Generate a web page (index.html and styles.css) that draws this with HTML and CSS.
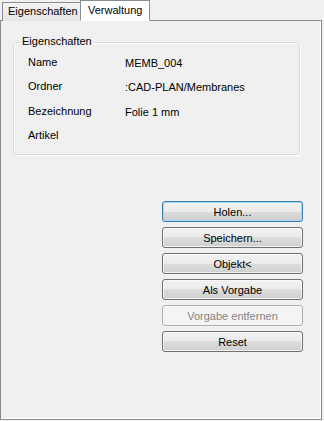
FILE: index.html
```html
<!DOCTYPE html>
<html lang="de">
<head>
    <meta charset="UTF-8">
    <title>Verwaltung</title>
    <link rel="stylesheet" href="styles.css">
</head>
<body>
    <div class="dialog">
        <div class="tabs">
            <div class="tab">Eigenschaften</div>
            <div class="tab active">Verwaltung</div>
        </div>

        <div class="panel">
            <div class="group">
                <span class="group-title">Eigenschaften</span>
                <div class="props">
                    <span class="prop-label">Name</span>
                    <span class="prop-value">MEMB_004</span>
                    <span class="prop-label">Ordner</span>
                    <span class="prop-value">:CAD-PLAN/Membranes</span>
                    <span class="prop-label">Bezeichnung</span>
                    <span class="prop-value">Folie 1 mm</span>
                    <span class="prop-label">Artikel</span>
                    <span class="prop-value"></span>
                </div>
            </div>

            <div class="actions">
                <button class="btn default">Holen...</button>
                <button class="btn">Speichern...</button>
                <button class="btn">Objekt&lt;</button>
                <button class="btn">Als Vorgabe</button>
                <button class="btn" disabled>Vorgabe entfernen</button>
                <button class="btn">Reset</button>
            </div>
        </div>
    </div>
</body>
</html>
```

FILE: styles.css
```css
body {
    margin: 0;
    padding: 0;
    background: #f0f0f0;
    font-family: Tahoma, "Liberation Sans", Arial, sans-serif;
    font-size: 11px;
    color: #000;
}

.dialog {
    width: 324px;
    height: 420px;
    display: flex;
    flex-direction: column;
}

.tabs {
    display: flex;
    align-items: flex-end;
    padding-left: 2px;
    height: 21px;
    position: relative;
    z-index: 1;
    margin-bottom: -1px;
}

.tab {
    box-sizing: border-box;
    width: 79px;
    height: 19px;
    padding-left: 5px;
    line-height: 17px;
    border: 1px solid #898c95;
    border-bottom: none;
    background: linear-gradient(#f3f3f3, #e5e5e5);
}

.tab.active {
    width: 70px;
    height: 21px;
    line-height: 18px;
    margin-left: -1px;
    padding-left: 7px;
    background: #fff;
    border-bottom: 1px solid #fff;
}

.panel {
    flex: 1;
    margin-right: 2px;
    border: 1px solid #898c95;
    box-shadow: inset -1px -1px 0 #fff;
    background: #f0f0f0;
    padding: 21px 18px 0 12px;
}

.group {
    position: relative;
    width: 271px;
    height: 111px;
    border: 1px solid #d5dfe5;
    border-radius: 3px;
    box-shadow: inset 1px 1px 0 #fff, 1px 1px 0 #fff;
    padding: 0 0 0 14px;
}

.group-title {
    position: absolute;
    top: -8px;
    left: 6px;
    padding: 0 2px;
    background: #f0f0f0;
    line-height: 13px;
}

.props {
    display: grid;
    grid-template-columns: 97px 1fr;
    grid-template-rows: 24px 25px 24px 24px;
    padding-top: 12px;
    line-height: 14px;
}

.prop-value {
    padding-top: 1px;
}

.actions {
    display: flex;
    flex-direction: column;
    align-items: flex-end;
    gap: 5px;
    margin-top: 46px;
}

.btn {
    width: 141px;
    height: 21px;
    font: inherit;
    color: #000;
    border: 1px solid #707070;
    border-radius: 3px;
    background: linear-gradient(#f2f2f2 0%, #ebebeb 50%, #dddddd 50%, #cfcfcf 100%);
    box-shadow: inset 0 0 0 1px rgba(255, 255, 255, 0.7);
    padding: 0;
}

.btn.default {
    border-color: #3c7fb1;
    box-shadow: inset 0 0 0 1px #9fd8f5;
}

.btn:disabled {
    color: #838383;
    border-color: #adb2b5;
    background: #f4f4f4;
    box-shadow: none;
}
```
